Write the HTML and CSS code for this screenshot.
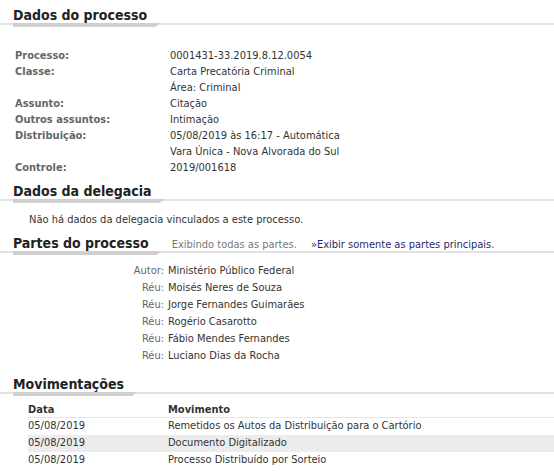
FILE: index.html
```html
<!DOCTYPE html>
<html lang="pt-br">
<head>
    <meta charset="UTF-8">
    <title>Consulta de Processos</title>
    <link rel="stylesheet" href="styles.css">
</head>
<body>

    <!-- Dados do processo -->
    <h2 class="subtitulo first"><span class="titulo">Dados do processo</span></h2>
    <table class="dados">
        <tr><td class="label">Processo:</td><td>0001431-33.2019.8.12.0054</td></tr>
        <tr><td class="label">Classe:</td><td>Carta Precatória Criminal</td></tr>
        <tr><td class="label"></td><td>Área: Criminal</td></tr>
        <tr><td class="label">Assunto:</td><td>Citação</td></tr>
        <tr><td class="label">Outros assuntos:</td><td>Intimação</td></tr>
        <tr><td class="label">Distribuição:</td><td>05/08/2019 às 16:17 - Automática</td></tr>
        <tr><td class="label"></td><td>Vara Única - Nova Alvorada do Sul</td></tr>
        <tr><td class="label">Controle:</td><td>2019/001618</td></tr>
    </table>

    <!-- Dados da delegacia -->
    <h2 class="subtitulo"><span class="titulo">Dados da delegacia</span></h2>
    <p class="vazio">Não há dados da delegacia vinculados a este processo.</p>

    <!-- Partes -->
    <h2 class="subtitulo"><span class="titulo">Partes do processo</span><span class="info">Exibindo todas as partes.</span><a href="#" class="link-partes">»Exibir somente as partes principais.</a></h2>
    <table class="partes">
        <tr><td class="tipo">Autor:</td><td>Ministério Público Federal</td></tr>
        <tr><td class="tipo">Réu:</td><td>Moisés Neres de Souza</td></tr>
        <tr><td class="tipo">Réu:</td><td>Jorge Fernandes Guimarães</td></tr>
        <tr><td class="tipo">Réu:</td><td>Rogério Casarotto</td></tr>
        <tr><td class="tipo">Réu:</td><td>Fábio Mendes Fernandes</td></tr>
        <tr><td class="tipo">Réu:</td><td>Luciano Dias da Rocha</td></tr>
    </table>

    <!-- Movimentacoes -->
    <h2 class="subtitulo mov"><span class="titulo">Movimentações</span></h2>
    <table class="movimentacoes">
        <thead>
            <tr><th class="data">Data</th><th>Movimento</th></tr>
        </thead>
        <tbody>
            <tr><td>05/08/2019</td><td>Remetidos os Autos da Distribuição para o Cartório</td></tr>
            <tr class="par"><td>05/08/2019</td><td>Documento Digitalizado</td></tr>
            <tr><td>05/08/2019</td><td>Processo Distribuído por Sorteio</td></tr>
        </tbody>
    </table>

</body>
</html>
```

FILE: styles.css
```css
body {
    margin: 0;
    font-family: "DejaVu Sans Condensed", "DejaVu Sans", sans-serif;
    font-stretch: condensed;
    font-size: 11px;
    color: #333;
    background: #fff;
}
table {
    border-collapse: collapse;
}
td, th {
    padding: 0;
}
/* Titulos das secoes */
.subtitulo {
    margin: 7px 0 0;
    padding-left: 13px;
    font-size: 14px;
    font-weight: bold;
    color: #222;
    line-height: 16px;
    white-space: nowrap;
    background: linear-gradient(#e3e3e3, #e3e3e3) no-repeat left 0 bottom 2px / 100% 2px;
}
.subtitulo.mov {
    margin-top: 12px;
}
.titulo {
    display: inline-block;
    position: relative;
    padding: 0 13px 4px 0;
}
.titulo::after {
    content: "";
    position: absolute;
    left: 0;
    right: 0;
    bottom: 0;
    height: 4px;
    background: #cfcfcf;
    clip-path: polygon(0 0, 100% 0, calc(100% - 5px) 100%, 0 100%);
}
.info {
    font-size: 11px;
    font-weight: normal;
    color: #777;
    margin-left: 10px;
}
.link-partes {
    font-size: 11px;
    font-weight: normal;
    color: #1f2a6b;
    text-decoration: none;
    margin-left: 14px;
}
/* Dados do processo */
.dados {
    margin: 21px 0 0 15px;
}
.dados td {
    height: 16px;
    line-height: 16px;
}
.dados .label {
    width: 155px;
    font-weight: bold;
    color: #666;
}
.vazio {
    margin: 9px 0 0 29px;
    line-height: 16px;
}
/* Partes */
.partes {
    margin-top: 7px;
}
.partes td {
    height: 17px;
    line-height: 17px;
}
.partes .tipo {
    width: 164px;
    text-align: right;
    color: #666;
    padding-right: 4px;
}
/* Movimentacoes */
.movimentacoes {
    margin: 7px 0 0 28px;
    width: calc(100% - 28px);
}
.movimentacoes th {
    text-align: left;
    font-weight: bold;
    color: #333;
    height: 14px;
    line-height: 14px;
    border-bottom: 1px solid #e6e6e6;
}
.movimentacoes .data {
    width: 140px;
}
.movimentacoes td {
    height: 17px;
    line-height: 15px;
    vertical-align: top;
}
.movimentacoes .par td {
    background: #ececec;
}
```
